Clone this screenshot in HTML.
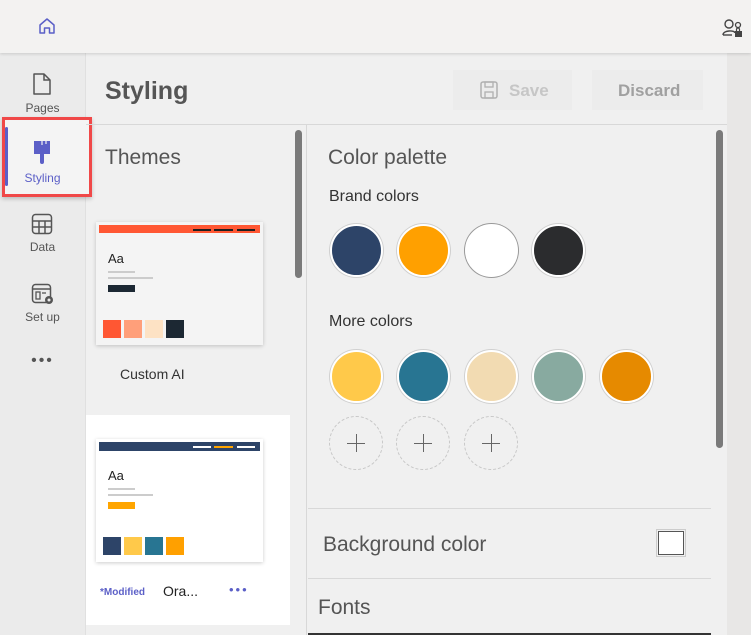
<!DOCTYPE html>
<html><head><style>
*{margin:0;padding:0;box-sizing:border-box}
body{width:751px;height:635px;overflow:hidden;background:#f0f0f0;font-family:"Liberation Sans",sans-serif;position:relative}
.a{position:absolute}
.c{position:absolute;width:53px;height:53px;border-radius:50%;border:2px solid #fff;box-shadow:0 0 0 1px #d0d0d0}
.p{position:absolute;width:54px;height:54px;border-radius:50%;border:1px dashed #c8c8c8}
.p::before{content:"";position:absolute;left:17px;top:26px;width:18px;height:1px;background:#666}
.p::after{content:"";position:absolute;left:26px;top:17px;width:1px;height:18px;background:#666}
.nl{position:absolute;width:85px;text-align:center;font-size:12px;color:#555}
</style></head><body>
<div class="a" style="left:0;top:0;width:751px;height:53px;background:#f3f2f1;box-shadow:0 1px 3px rgba(0,0,0,.15);z-index:2"></div>
<svg class="a" style="left:37px;top:16px;z-index:3" width="20" height="20" viewBox="0 0 20 20"><path d="M3 9 L10 3 L17 9 V17 H12.5 V12 H7.5 V17 H3 Z" fill="none" stroke="#5b5fc7" stroke-width="1.5" stroke-linejoin="round"/></svg>
<svg class="a" style="left:722px;top:18px;z-index:3" width="24" height="22" viewBox="0 0 24 22"><circle cx="7" cy="6" r="4" fill="none" stroke="#444" stroke-width="1.4"/><path d="M1 17 C1 12 13 12 13 15" fill="none" stroke="#444" stroke-width="1.4"/><path d="M1 17 H10" stroke="#444" stroke-width="1.4"/><circle cx="16" cy="7" r="2.5" fill="none" stroke="#444" stroke-width="1.3"/><path d="M14.5 13 V11.5 a1.5 1.5 0 0 1 3 0 V13" fill="none" stroke="#444" stroke-width="1.2"/><rect x="13" y="13" width="7" height="6" fill="#444"/></svg>
<div class="a" style="left:0;top:53px;width:86px;height:582px;background:#ebebeb;border-right:1px solid #e0e0e0"></div>
<div class="a" style="left:727px;top:53px;width:24px;height:582px;background:#e8e7e6"></div>
<svg class="a" style="left:31px;top:72px" width="22" height="24" viewBox="0 0 22 24"><path d="M3 2 H13 L19 8 V22 H3 Z" fill="none" stroke="#555" stroke-width="1.5" stroke-linejoin="round"/><path d="M13 2 V8 H19" fill="none" stroke="#555" stroke-width="1.5"/></svg>
<div class="nl" style="top:101px">Pages</div>
<div class="a" style="left:2px;top:117px;width:90px;height:80px;background:#f4f4f4;border:3px solid #f04848;box-shadow:0 2px 4px rgba(0,0,0,.2)"></div>
<div class="a" style="left:5px;top:127px;width:3px;height:59px;background:#5b5fc7;border-radius:2px"></div>
<svg class="a" style="left:32px;top:140px" width="20" height="24" viewBox="0 0 20 24"><path d="M2 1 H18 V12 H2 Z" fill="#5b5fc7"/><path d="M2 12 H18 V14 H12 V22 a2 2 0 0 1 -4 0 V14 H2Z" fill="#5b5fc7"/><path d="M10 1 V5 M14 1 V4" stroke="#f4f4f4" stroke-width="1.2"/></svg>
<div class="nl" style="top:171px;color:#5b5fc7">Styling</div>
<svg class="a" style="left:31px;top:213px" width="22" height="22" viewBox="0 0 22 22"><rect x="1.5" y="1.5" width="19" height="19" rx="3" fill="none" stroke="#555" stroke-width="1.5"/><path d="M1.5 8 H20.5 M1.5 14 H20.5 M8 8 V20.5 M14 8 V20.5" stroke="#555" stroke-width="1.5"/></svg>
<div class="nl" style="top:240px">Data</div>
<svg class="a" style="left:31px;top:283px" width="26" height="24" viewBox="0 0 26 24"><rect x="1.5" y="1.5" width="18" height="18" rx="3" fill="none" stroke="#555" stroke-width="1.5"/><path d="M1.5 6 H19.5" stroke="#555" stroke-width="1.5"/><rect x="5" y="9" width="4" height="7" fill="none" stroke="#555" stroke-width="1.3"/><path d="M11 10 H15" stroke="#555" stroke-width="1.3"/><circle cx="18" cy="17" r="4" fill="#555"/><circle cx="18" cy="17" r="1.5" fill="#ebebeb"/></svg>
<div class="nl" style="top:310px">Set up</div>
<div class="nl" style="top:352px;font-size:16px;letter-spacing:2px;color:#555">•••</div>
<div class="a" style="left:86px;top:124px;width:641px;height:1px;background:#d8d8d8"></div>
<div class="a" style="left:105px;top:77px;font-size:25px;font-weight:bold;color:#555">Styling</div>
<div class="a" style="left:453px;top:70px;width:119px;height:40px;background:#ececec"></div>
<svg class="a" style="left:480px;top:81px" width="18" height="18" viewBox="0 0 18 18"><rect x="1" y="1" width="16" height="16" rx="2" fill="none" stroke="#b0b0b0" stroke-width="1.5"/><rect x="5" y="1" width="8" height="5" fill="none" stroke="#b0b0b0" stroke-width="1.3"/><rect x="5" y="11" width="8" height="6" fill="none" stroke="#b0b0b0" stroke-width="1.3"/></svg>
<div class="a" style="left:509px;top:81px;font-size:17px;font-weight:bold;color:#c6c6c6">Save</div>
<div class="a" style="left:592px;top:70px;width:111px;height:40px;background:#ececec"></div>
<div class="a" style="left:618px;top:81px;font-size:17px;font-weight:bold;color:#a0a0a0">Discard</div>
<div class="a" style="left:306px;top:125px;width:1px;height:510px;background:#d8d8d8"></div>
<div class="a" style="left:295px;top:130px;width:7px;height:148px;background:#7a7a7a;border-radius:4px"></div>
<div class="a" style="left:105px;top:146px;font-size:21px;color:#555">Themes</div>
<div class="a" style="left:96px;top:222px;width:167px;height:123px;background:#f4f4f4;box-shadow:0 1px 4px rgba(0,0,0,.2)"></div>
<div class="a" style="left:99px;top:225px;width:161px;height:8px;background:#ff5733"></div>
<div class="a" style="left:193px;top:229px;width:18px;height:2px;background:#1e1e1e"></div>
<div class="a" style="left:214px;top:229px;width:19px;height:2px;background:#1e1e1e"></div>
<div class="a" style="left:237px;top:229px;width:18px;height:2px;background:#1e1e1e"></div>
<div class="a" style="left:108px;top:251px;font-size:13px;color:#222">Aa</div>
<div class="a" style="left:108px;top:271px;width:27px;height:2px;background:#ccc"></div>
<div class="a" style="left:108px;top:277px;width:45px;height:2px;background:#ccc"></div>
<div class="a" style="left:108px;top:285px;width:27px;height:7px;background:#1c2833"></div>
<div class="a" style="left:103px;top:320px;width:18px;height:18px;background:#ff5733"></div>
<div class="a" style="left:124px;top:320px;width:18px;height:18px;background:#ff9f7a"></div>
<div class="a" style="left:145px;top:320px;width:18px;height:18px;background:#fde2c4"></div>
<div class="a" style="left:166px;top:320px;width:18px;height:18px;background:#1c2833"></div>
<div class="a" style="left:120px;top:366px;font-size:14px;color:#333">Custom AI</div>
<div class="a" style="left:86px;top:415px;width:204px;height:210px;background:#fff"></div>
<div class="a" style="left:96px;top:439px;width:167px;height:123px;background:#fff;box-shadow:0 1px 4px rgba(0,0,0,.2)"></div>
<div class="a" style="left:99px;top:442px;width:161px;height:9px;background:#2d4468"></div>
<div class="a" style="left:193px;top:446px;width:18px;height:2px;background:#fff"></div>
<div class="a" style="left:214px;top:446px;width:19px;height:2px;background:#ffa500"></div>
<div class="a" style="left:237px;top:446px;width:18px;height:2px;background:#fff"></div>
<div class="a" style="left:108px;top:468px;font-size:13px;color:#222">Aa</div>
<div class="a" style="left:108px;top:488px;width:27px;height:2px;background:#ccc"></div>
<div class="a" style="left:108px;top:494px;width:45px;height:2px;background:#ccc"></div>
<div class="a" style="left:108px;top:502px;width:27px;height:7px;background:#ffa500"></div>
<div class="a" style="left:103px;top:537px;width:18px;height:18px;background:#2d4468"></div>
<div class="a" style="left:124px;top:537px;width:18px;height:18px;background:#ffc94a"></div>
<div class="a" style="left:145px;top:537px;width:18px;height:18px;background:#287592"></div>
<div class="a" style="left:166px;top:537px;width:18px;height:18px;background:#ffa000"></div>
<div class="a" style="left:100px;top:587px;font-size:10px;font-weight:bold;color:#5b5fc7">*Modified</div>
<div class="a" style="left:163px;top:583px;font-size:14px;color:#222">Ora...</div>
<div class="a" style="left:229px;top:582px;font-size:13px;letter-spacing:2px;color:#5b5fc7">•••</div>
<div class="a" style="left:716px;top:130px;width:7px;height:318px;background:#7a7a7a;border-radius:4px"></div>
<div class="a" style="left:328px;top:146px;font-size:21px;color:#555">Color palette</div>
<div class="a" style="left:329px;top:188px;font-size:16px;color:#333">Brand colors</div>
<div class="c" style="left:330px;top:224px;background:#2d4468"></div>
<div class="c" style="left:397px;top:224px;background:#ffa000"></div>
<div class="c" style="left:465px;top:224px;background:#fff;box-shadow:0 0 0 1px #999"></div>
<div class="c" style="left:532px;top:224px;background:#2b2c2e"></div>
<div class="a" style="left:329px;top:313px;font-size:16px;color:#333">More colors</div>
<div class="c" style="left:330px;top:350px;background:#ffc94a"></div>
<div class="c" style="left:397px;top:350px;background:#287592"></div>
<div class="c" style="left:465px;top:350px;background:#f2dbb2"></div>
<div class="c" style="left:532px;top:350px;background:#88aaa0"></div>
<div class="c" style="left:600px;top:350px;background:#e68a00"></div>
<div class="p" style="left:329px;top:416px"></div>
<div class="p" style="left:396px;top:416px"></div>
<div class="p" style="left:464px;top:416px"></div>
<div class="a" style="left:308px;top:508px;width:403px;height:1px;background:#d8d8d8"></div>
<div class="a" style="left:323px;top:533px;font-size:21px;color:#555">Background color</div>
<div class="a" style="left:656px;top:529px;width:30px;height:28px;border:1px solid #ccc;padding:1px"><div style="width:100%;height:100%;background:#fff;border:1px solid #555"></div></div>
<div class="a" style="left:308px;top:578px;width:403px;height:1px;background:#d8d8d8"></div>
<div class="a" style="left:318px;top:596px;font-size:21px;color:#555">Fonts</div>
<div class="a" style="left:308px;top:633px;width:403px;height:2px;background:#333"></div>
</body></html>
